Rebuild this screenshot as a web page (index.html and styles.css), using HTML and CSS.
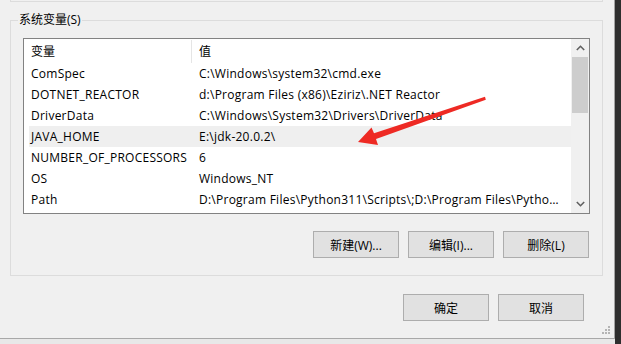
FILE: index.html
```html
<!DOCTYPE html>
<html lang="zh-CN">
<head>
<meta charset="utf-8">
<title>环境变量</title>
<link rel="stylesheet" href="styles.css">
</head>
<body>
<div class="window">
  <div class="prev-box"></div>
  <div class="group">
    <div class="group-head"><span class="group-title">系统变量(S)</span></div>
    <div class="list">
      <div class="table">
        <div class="thead">
          <div class="hcell hcell-name">变量</div>
          <div class="hcell">值</div>
        </div>
        <div class="row"><div class="cell">ComSpec</div><div class="cell">C:\Windows\system32\cmd.exe</div></div>
        <div class="row"><div class="cell">DOTNET_REACTOR</div><div class="cell">d:\Program Files (x86)\Eziriz\.NET Reactor</div></div>
        <div class="row"><div class="cell">DriverData</div><div class="cell">C:\Windows\System32\Drivers\DriverData</div></div>
        <div class="row row-hl"><div class="cell">JAVA_HOME</div><div class="cell">E:\jdk-20.0.2\</div></div>
        <div class="row"><div class="cell">NUMBER_OF_PROCESSORS</div><div class="cell">6</div></div>
        <div class="row"><div class="cell">OS</div><div class="cell">Windows_NT</div></div>
        <div class="row"><div class="cell">Path</div><div class="cell cell-trunc">D:\Program Files\Python311\Scripts\;D:\Program Files\Python311\;C:\Windows\system32</div></div>
      </div>
      <div class="scrollbar">
        <div class="sb-btn">
          <svg width="9" height="6" viewBox="0 0 9 6"><path d="M0.8 5 L4.5 1.3 L8.2 5" fill="none" stroke="#606060" stroke-width="1.6"/></svg>
        </div>
        <div class="sb-thumb"></div>
        <div class="sb-track"></div>
        <div class="sb-btn">
          <svg width="9" height="6" viewBox="0 0 9 6"><path d="M0.8 1 L4.5 4.7 L8.2 1" fill="none" stroke="#606060" stroke-width="1.6"/></svg>
        </div>
      </div>
    </div>
    <div class="btn-row">
      <button class="btn">新建(W)...</button>
      <button class="btn">编辑(I)...</button>
      <button class="btn">删除(L)</button>
    </div>
  </div>
  <div class="dlg-row">
    <button class="btn">确定</button>
    <button class="btn">取消</button>
  </div>
  <svg class="grip" width="9" height="9" viewBox="0 0 9 9">
    <rect x="6" y="0" width="2" height="2" fill="#b4b4b4"/>
    <rect x="3" y="3" width="2" height="2" fill="#b4b4b4"/>
    <rect x="6" y="3" width="2" height="2" fill="#b4b4b4"/>
    <rect x="0" y="6" width="2" height="2" fill="#b4b4b4"/>
    <rect x="3" y="6" width="2" height="2" fill="#b4b4b4"/>
    <rect x="6" y="6" width="2" height="2" fill="#b4b4b4"/>
  </svg>
  <svg class="arrow" width="614" height="338" viewBox="0 0 614 338">
    <polygon points="358,142 371.5,127.5 374,133.2 485,96.8 485.8,99.8 376,139 378,145" fill="#ee2a24"/>
  </svg>
</div>
<div class="desk"></div>
</body>
</html>
```

FILE: styles.css
```css
html, body {
  margin: 0;
  padding: 0;
}
body {
  display: flex;
  height: 344px;
  background: #e8e8e8;
  font-family: "Open Sans", "Noto Sans CJK SC", sans-serif;
  font-size: 12px;
  color: #000;
  overflow: hidden;
}
.window {
  position: relative;
  width: 615px;
  height: 339px;
  box-sizing: border-box;
  background: #f0f0f0;
  border-right: 1px solid #a3a3a3;
  border-bottom: 1px solid #a8a8a8;
}
.desk {
  flex: 1;
  background: #2e2e2e;
}
.prev-box {
  margin-left: 10px;
  width: 593px;
  height: 2px;
  box-sizing: border-box;
  border: 1px solid #dcdcdc;
  border-top: none;
}
.group {
  margin: 18px 0 0 10px;
  width: 593px;
  height: 256px;
  box-sizing: border-box;
  border: 1px solid #dcdcdc;
}
.group-head {
  margin-top: -9px;
  padding-left: 7px;
  height: 16px;
  line-height: 16px;
}
.group-title {
  display: inline-block;
  padding: 0 1px;
  background: #f0f0f0;
}
.list {
  margin: 10px 0 0 12px;
  width: 567px;
  height: 176px;
  box-sizing: border-box;
  border: 1px solid #828282;
  background: #fff;
  display: flex;
}
.table {
  flex: 1;
  min-width: 0;
  overflow: hidden;
}
.thead {
  display: grid;
  grid-template-columns: 168px minmax(0, 1fr);
  height: 24px;
  align-items: center;
}
.hcell {
  padding-left: 7px;
  line-height: 23px;
}
.hcell-name {
  border-right: 1px solid #e5e5e5;
}
.row {
  display: grid;
  grid-template-columns: 168px minmax(0, 1fr);
  height: 21px;
  line-height: 22px;
}
.row-hl {
  background: linear-gradient(90deg, transparent 5px, #efefef 5px);
}
.cell {
  padding-left: 7px;
  white-space: nowrap;
  overflow: hidden;
  letter-spacing: 0.25px;
}
.cell-trunc {
  text-overflow: ellipsis;
  padding-right: 7px;
}
.scrollbar {
  width: 18px;
  display: flex;
  flex-direction: column;
  background: #f0f0f0;
}
.sb-btn {
  height: 18px;
  display: flex;
  align-items: center;
  justify-content: center;
}
.sb-thumb {
  height: 56px;
  margin: 0 1px;
  background: #cdcdcd;
}
.sb-track {
  flex: 1;
}
.btn-row {
  display: flex;
  justify-content: flex-end;
  gap: 9px;
  margin: 17px 13px 0 0;
}
.btn {
  width: 86px;
  height: 27px;
  box-sizing: border-box;
  border: 1px solid #adadad;
  background: #e1e1e1;
  font-family: "Open Sans", "Noto Sans CJK SC", sans-serif;
  font-size: 12px;
  color: #000;
  padding: 0;
  margin: 0;
}
.dlg-row {
  display: flex;
  justify-content: flex-end;
  gap: 9px;
  margin: 18px 30px 0 0;
}
.grip {
  position: absolute;
  right: 3px;
  bottom: 3px;
}
.arrow {
  position: absolute;
  left: 0;
  top: 0;
  pointer-events: none;
}
```
